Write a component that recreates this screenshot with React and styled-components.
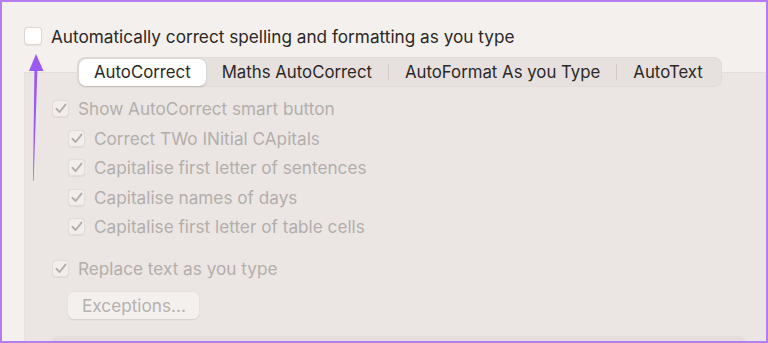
import React from 'react';
import styled, { createGlobalStyle } from 'styled-components';

const GlobalStyle = createGlobalStyle`
  html, body {
    margin: 0;
    padding: 0;
    background: #f4f0ed;
  }
  body {
    font-family: Inter, "Noto Sans", "Liberation Sans", sans-serif;
  }
`;

const Frame = styled.div`
  position: relative;
  box-sizing: border-box;
  width: 768px;
  height: 343px;
  overflow: hidden;
  background: #f4f0ed;
  border: 2px solid #b57df0;
  padding: 25px 0 0 22px;
`;

const MasterRow = styled.label`
  display: flex;
  align-items: center;
  gap: 9px;
  height: 18px;
  font-size: 17.2px;
  color: #2b2826;
`;

const Box = styled.span`
  box-sizing: border-box;
  flex: none;
  width: ${p => p.size}px;
  height: ${p => p.size}px;
  border-radius: 4px;
  display: flex;
  align-items: center;
  justify-content: center;
  background: ${p => (p.disabled ? '#f0edea' : '#ffffff')};
  border: 1px solid ${p => (p.disabled ? '#e2ddd9' : '#dcd7d3')};
  box-shadow: 0 0.5px 1px rgba(0, 0, 0, 0.06);
`;

const Section = styled.div`
  display: flex;
  flex-direction: column;
  margin-top: 12px;
  margin-right: -12px;
`;

const TabBar = styled.div`
  position: relative;
  z-index: 1;
  align-self: flex-start;
  margin-left: 53px;
  margin-bottom: -15px;
  display: flex;
  align-items: center;
  box-sizing: border-box;
  width: 645px;
  height: 30px;
  padding: 0 1px;
  background: #e6e1de;
  border: 1px solid #e0dbd8;
  border-radius: 8px;
`;

const Tab = styled.div`
  box-sizing: border-box;
  height: 27px;
  display: flex;
  align-items: center;
  justify-content: center;
  padding: 0 ${p => p.pad}px;
  font-size: 16.8px;
  color: #2b2826;
  border-radius: 7px;
  white-space: nowrap;
  background: ${p => (p.active ? '#ffffff' : 'transparent')};
  box-shadow: ${p => (p.active ? '0 0.5px 2px rgba(0,0,0,0.18)' : 'none')};
`;

const Divider = styled.span`
  width: 1px;
  height: 16px;
  background: #cfcac7;
  flex: none;
`;

const Panel = styled.div`
  background: #ebe6e3;
  border-top: 1px solid #e3dedb;
  border-left: 1px solid #e6e1de;
  padding: 21px 0 0 27px;
  height: 280px;
`;

const Item = styled.div`
  display: flex;
  align-items: center;
  gap: 9px;
  height: 29.5px;
  padding-left: ${p => (p.nested ? 16 : 0)}px;
  font-size: 17.2px;
  color: #b3aeab;
`;

const Gap = styled.div`
  height: ${p => p.h}px;
`;

const Button = styled.div`
  box-sizing: border-box;
  width: 131px;
  height: 27px;
  margin-left: 16px;
  display: flex;
  align-items: center;
  padding-left: 14px;
  font-size: 17.2px;
  color: #b6b1ae;
  background: #f3f0ee;
  border-radius: 6px;
  box-shadow: 0 0.5px 1.5px rgba(0, 0, 0, 0.1);
`;

const BottomBox = styled.div`
  margin: 17px 0 0 0;
  width: 694px;
  height: 20px;
  background: #e3dedb;
  border-radius: 8px 8px 0 0;
`;

const Arrow = styled.svg`
  position: absolute;
  left: 0;
  top: 0;
  pointer-events: none;
`;

const Check = () => (
  <svg width="12" height="11" viewBox="0 0 12 11">
    <path d="M1.5 5.8 L4.6 9 L10.5 1.6" fill="none" stroke="#b3aeab" strokeWidth="1.9" strokeLinecap="round" strokeLinejoin="round" />
  </svg>
);

const CheckRow = ({ nested, children }) => (
  <Item nested={nested}>
    <Box size={17} disabled>
      <Check />
    </Box>
    {children}
  </Item>
);

const tabs = [
  { label: 'AutoCorrect', pad: 15, active: true },
  { label: 'Maths AutoCorrect', pad: 16 },
  { label: 'AutoFormat As you Type', pad: 16 },
  { label: 'AutoText', pad: 16 },
];

export default function App() {
  return (
    <>
      <GlobalStyle />
      <Frame>
        <MasterRow>
          <Box size={18} />
          Automatically correct spelling and formatting as you type
        </MasterRow>
        <Section>
          <TabBar>
            {tabs.map((t, i) => (
              <React.Fragment key={t.label}>
                {i > 1 && <Divider />}
                <Tab active={t.active} pad={t.pad}>{t.label}</Tab>
              </React.Fragment>
            ))}
          </TabBar>
          <Panel>
            <CheckRow>Show AutoCorrect smart button</CheckRow>
            <CheckRow nested>Correct TWo INitial CApitals</CheckRow>
            <CheckRow nested>Capitalise first letter of sentences</CheckRow>
            <CheckRow nested>Capitalise names of days</CheckRow>
            <CheckRow nested>Capitalise first letter of table cells</CheckRow>
            <Gap h={12} />
            <CheckRow>Replace text as you type</CheckRow>
            <Gap h={9} />
            <Button>Exceptions...</Button>
            <BottomBox />
          </Panel>
        </Section>
        <Arrow width="60" height="190" viewBox="0 0 60 190">
          <polygon points="34,52 27,69 41.5,69" fill="#9d59f3" />
          <polygon points="32.4,68 35.4,68 31.6,179 31,179" fill="#9d59f3" />
        </Arrow>
      </Frame>
    </>
  );
}
